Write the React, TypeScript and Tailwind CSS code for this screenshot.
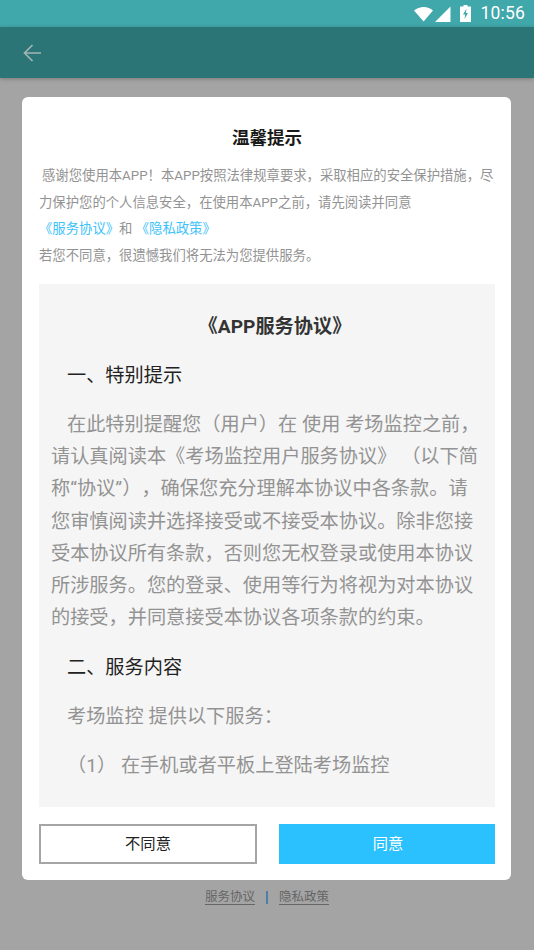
const cjk = { fontFamily: 'Roboto, "Noto Sans CJK SC", "Noto Sans", sans-serif' };

const bodyLines = [
  '请认真阅读本《考场监控用户服务协议》 （以下简',
  '称“协议”），确保您充分理解本协议中各条款。请',
  '您审慎阅读并选择接受或不接受本协议。除非您接',
  '受本协议所有条款，否则您无权登录或使用本协议',
  '所涉服务。您的登录、使用等行为将视为对本协议',
  '的接受，并同意接受本协议各项条款的约束。',
];

export default function App() {
  return (
    <div className="w-[534px] h-[950px] bg-[#a4a4a4] overflow-hidden flex flex-col [text-spacing-trim:space-all]" style={cjk}>
      <div className="w-full h-[27px] shrink-0 bg-[#40a7aa] flex items-center justify-end pr-[9px] text-white">
        <svg width="20" height="16" viewBox="0 0 20 16" className="mr-[1px]"><path d="M0 4.500C2.800 2.200 6.200 1 9.700 1s6.900 1.200 9.300 3.500L9.600 15.500z" fill="#fff" /></svg>
        <svg width="16" height="16" viewBox="0 0 16 16" className="mr-[9px]"><path d="M15.500 0.500V16H0z" fill="#fff" /></svg>
        <svg width="11" height="17" viewBox="0 0 11 17" className="mr-[9px]"><path d="M3.500 0h4v1.500H11V17H0V1.500h3.500z" fill="#fff" /><path d="M6.500 3.500L3 9.500h2.200L4.500 14l3.500-6H5.800z" fill="#40a7aa" /></svg>
        <span className="text-[17.5px] leading-[27px] tracking-[0.2px]" style={{ fontFamily: 'Roboto, sans-serif' }}>10:56</span>
      </div>
      <div className="w-full h-[51px] shrink-0 bg-[#2b7577] flex items-center pl-[23px] shadow-[0_1px_4px_rgba(0,0,0,0.25)]">
        <svg width="18" height="18" viewBox="0 0 18 18" fill="none" stroke="#a3b4b5" strokeWidth="1.700"><path d="M18 9H1.500M9.500 1L1.500 9l8 8" /></svg>
      </div>

      <div className="mt-[19px] ml-[22px] w-[489px] h-[783px] shrink-0 bg-white rounded-[6px] flex flex-col pl-[17px] pr-[16px] pb-[16px]">
        <h1 className="mt-[28px] h-[26px] text-center text-[17.5px] leading-[26px] font-bold text-[#1a1a1a]">温馨提示</h1>
        <div className="mt-[12px] text-[13.35px] leading-[26.6px] text-[#939393] h-[106px]">
          <p className="whitespace-nowrap pl-[3px]">感谢您使用本APP！本APP按照法律规章要求，采取相应的安全保护措施，尽</p>
          <p className="whitespace-nowrap">力保护您的个人信息安全，在使用本APP之前，请先阅读并同意</p>
          <p className="whitespace-nowrap">
            <span className="text-[#3cc2fb]">《服务协议》</span>和 <span className="text-[#3cc2fb]">《隐私政策》</span>
          </p>
          <p className="whitespace-nowrap">若您不同意，很遗憾我们将无法为您提供服务。</p>
        </div>

        <div className="mt-[15px] h-[523px] shrink-0 bg-[#f5f5f5] px-[12px] overflow-hidden">
          <h2 className="mt-[27px] h-[32px] pl-[16px] text-center text-[19.2px] leading-[32px] font-bold text-[#333333]">《APP服务协议》</h2>
          <p className="mt-[17px] pl-[16px] text-[19.2px] leading-[32px] text-[#222222] whitespace-nowrap">一、特别提示</p>
          <div className="mt-[17px] text-[19.2px] leading-[32.2px] text-[#939393]">
            <p className="pl-[16px] whitespace-nowrap">在此特别提醒您（用户）在 使用 考场监控之前，</p>
            {bodyLines.map((line) => (
              <p key={line} className="whitespace-nowrap">{line}</p>
            ))}
          </div>
          <p className="mt-[18px] pl-[16px] text-[19.2px] leading-[32px] text-[#222222] whitespace-nowrap">二、服务内容</p>
          <p className="mt-[17px] pl-[16px] text-[19.2px] leading-[32px] text-[#939393] whitespace-nowrap">考场监控 提供以下服务：</p>
          <p className="mt-[17px] pl-[16px] text-[19.2px] leading-[32px] text-[#939393] whitespace-nowrap">（1） 在手机或者平板上登陆考场监控</p>
        </div>

        <div className="mt-[17px] flex justify-between">
          <button className="w-[218px] h-[40px] border-2 border-[#a5a5a5] bg-white text-[15.3px] text-[#222222]">不同意</button>
          <button className="w-[216px] h-[40px] bg-[#2bc1fe] pl-[2px] text-[15.3px] text-white">同意</button>
        </div>
      </div>

      <div className="mt-[7px] flex items-center justify-center text-[12.500px] leading-[20px] text-[#666666]">
        <span className="underline underline-offset-[3px]">服务协议</span>
        <span className="mx-[11px] w-[2px] h-[13px] bg-[#4f7fa8]" />
        <span className="underline underline-offset-[3px]">隐私政策</span>
      </div>
    </div>
  );
}
